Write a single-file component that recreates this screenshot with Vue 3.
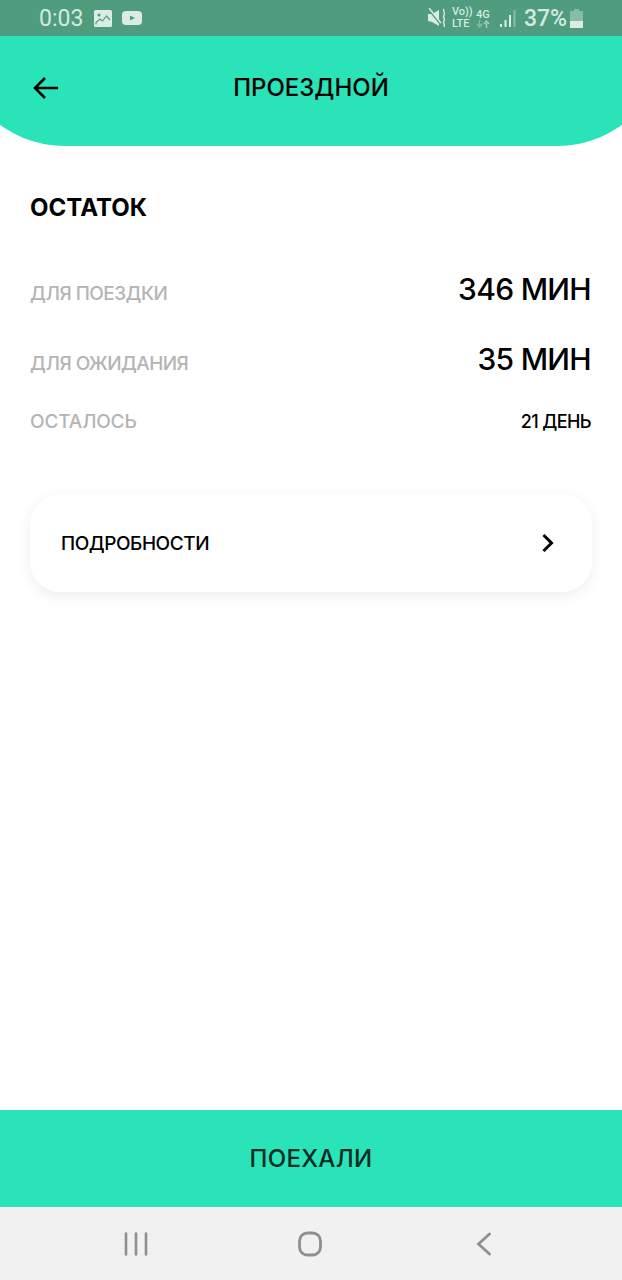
<template>
  <div class="screen">
    <!-- Status bar -->
    <div class="status-bar">
      <div class="status-left">
        <span class="clock">0:03</span>
        <svg class="icon-picture" width="18" height="17" viewBox="0 0 18 17">
          <rect x="0" y="0" width="18" height="17" rx="1.5" fill="#dcebe4" />
          <circle cx="5" cy="5" r="1.6" fill="#4f9c7f" />
          <path d="M2 14.5V12.5l4-3.5 2.5 2 4-5 3.5 4" fill="none" stroke="#4f9c7f" stroke-width="1.2" />
        </svg>
        <svg class="icon-video" width="20" height="14" viewBox="0 0 20 14">
          <rect x="0" y="0" width="20" height="14" rx="4" fill="#dcebe4" />
          <path d="M8 4.5l5 2.5-5 2.5z" fill="#4f9c7f" />
        </svg>
      </div>
      <div class="status-right">
        <svg class="icon-mute" width="19" height="20" viewBox="0 0 19 20">
          <path d="M0 6h4l7-4v16L4 14l-4-1z" fill="#dcebe4" />
          <path d="M1 2l12 15" stroke="#4f9c7f" stroke-width="1.6" />
          <path d="M1 0l12 15" stroke="#dcebe4" stroke-width="1.4" />
          <path d="M16 1c-2 2 2 3 0 6s2 3 0 6 2 3 0 6" fill="none" stroke="#dcebe4" stroke-width="1.4" />
        </svg>
        <div class="net-label">
          <span>Vo))</span>
          <span>LTE</span>
        </div>
        <div class="net-type">
          <span>4G</span>
          <svg width="14" height="8" viewBox="0 0 14 8">
            <path d="M3.5 0v5M1 4l2.5 3L6 4" fill="none" stroke="#86bda6" stroke-width="1.4" />
            <path d="M10.5 8V3M8 4l2.5-3L13 4" fill="none" stroke="#a7d0bf" stroke-width="1.4" />
          </svg>
        </div>
        <svg class="icon-signal" width="16" height="17" viewBox="0 0 16 17">
          <rect x="0" y="14" width="2" height="3" fill="#dcebe4" />
          <rect x="4.5" y="10" width="2" height="7" fill="#dcebe4" />
          <rect x="9" y="5" width="2" height="12" fill="#dcebe4" />
          <rect x="13.5" y="0" width="2" height="17" fill="#86bda6" />
        </svg>
        <span class="battery-text">37%</span>
        <svg class="icon-battery" width="13" height="19" viewBox="0 0 13 19">
          <path d="M4 0h5v2h4v17H0V2h4z" fill="#86bda6" />
          <rect x="0" y="12" width="13" height="7" fill="#dcebe4" />
        </svg>
      </div>
    </div>

    <!-- Header -->
    <header class="header">
      <svg class="back" width="28" height="26" viewBox="0 0 28 26">
        <path d="M26 13H3M13 3L3 13l10 10" fill="none" stroke="#000" stroke-width="2.6" />
      </svg>
      <h1 class="title">ПРОЕЗДНОЙ</h1>
    </header>

    <!-- Content -->
    <main class="content">
      <h2 class="section-title">ОСТАТОК</h2>

      <div class="row row-first">
        <span class="row-label">ДЛЯ ПОЕЗДКИ</span>
        <span class="row-value">346 МИН</span>
      </div>
      <div class="row row-second">
        <span class="row-label">ДЛЯ ОЖИДАНИЯ</span>
        <span class="row-value">35 МИН</span>
      </div>
      <div class="row row-third">
        <span class="row-label">ОСТАЛОСЬ</span>
        <span class="row-value-small">21 ДЕНЬ</span>
      </div>

      <div class="details">
        <span class="details-text">ПОДРОБНОСТИ</span>
        <svg width="14" height="20" viewBox="0 0 14 20">
          <path d="M2.5 2l8 8-8 8" fill="none" stroke="#000" stroke-width="3" />
        </svg>
      </div>
    </main>

    <!-- Action -->
    <button class="go">ПОЕХАЛИ</button>

    <!-- Navigation bar -->
    <nav class="nav-bar">
      <svg width="24" height="24" viewBox="0 0 24 24">
        <path d="M2 1.5v21M12 1.5v21M22 1.5v21" fill="none" stroke="#8f8f8f" stroke-width="2.6" stroke-linecap="round" />
      </svg>
      <svg class="nav-home" width="26" height="26" viewBox="0 0 26 26">
        <rect x="2.5" y="2" width="21" height="22" rx="8" fill="none" stroke="#8f8f8f" stroke-width="2.8" />
      </svg>
      <svg class="nav-back" width="16" height="24" viewBox="0 0 16 24">
        <path d="M13.5 2L2.5 12l11 10" fill="none" stroke="#8f8f8f" stroke-width="2.8" stroke-linecap="round" />
      </svg>
    </nav>
  </div>
</template>

<script setup>
</script>

<style>
html,
body {
  margin: 0;
  background: #fff;
}
</style>

<style scoped>
.screen {
  width: 622px;
  height: 1280px;
  display: flex;
  flex-direction: column;
  overflow: hidden;
  font-family: Inter, 'Noto Sans', sans-serif;
  color: #000;
  background: #fff;
}

.status-bar {
  height: 36px;
  flex: none;
  background: #4f9c7f;
  display: flex;
  justify-content: space-between;
  align-items: center;
  padding: 0 39px;
  box-sizing: border-box;
  color: #d5eadf;
  font-family: Roboto, sans-serif;
}

.status-left,
.status-right {
  display: flex;
  align-items: center;
}

.clock {
  font-size: 23px;
  width: 55px;
}

.icon-video {
  margin-left: 10px;
}

.net-label {
  display: flex;
  flex-direction: column;
  font-size: 11px;
  line-height: 12px;
  margin-left: 5px;
  width: 18px;
  font-weight: 500;
}

.net-type {
  display: flex;
  flex-direction: column;
  align-items: center;
  font-size: 11px;
  line-height: 11px;
  margin-left: 6px;
  font-weight: 500;
}

.icon-signal {
  margin-left: 10px;
}

.battery-text {
  font-size: 23px;
  margin-left: 8px;
  font-weight: 500;
}

.icon-battery {
  margin-left: 3px;
}

/* curve starts off-screen, so it meets the edge at a slope */
.header {
  height: 110px;
  flex: none;
  display: flex;
  align-items: center;
  justify-content: center;
  position: relative;
  overflow: hidden;
  padding-bottom: 6px;
  box-sizing: border-box;
}

.header::before {
  content: '';
  position: absolute;
  top: 0;
  bottom: 0;
  left: -45px;
  right: -45px;
  background: #2ae3b9;
  border-radius: 0 0 115px 115px;
}

.back {
  position: absolute;
  left: 32px;
  top: 39px;
}

.title {
  position: relative;
  margin: 0;
  font-size: 24px;
  font-weight: 500;
  line-height: 30px;
}

.content {
  flex: 1;
  padding: 47px 30px 0;
}

.section-title {
  margin: 0;
  font-size: 24px;
  font-weight: 700;
  line-height: 30px;
}

.row {
  display: flex;
  justify-content: space-between;
  align-items: baseline;
}

.row-first {
  margin-top: 46px;
}

.row-second {
  margin-top: 30px;
}

.row-third {
  margin-top: 31px;
}

.row-label {
  font-size: 19px;
  color: #b4b4b4;
  font-weight: 500;
  letter-spacing: -0.55px;
}

.row-third .row-label {
  letter-spacing: -0.15px;
}

.row-value {
  font-size: 30px;
  font-weight: 500;
  line-height: 40px;
  letter-spacing: -0.7px;
  margin-right: 1px;
}

.row-value-small {
  font-size: 18px;
  font-weight: 500;
  line-height: 24px;
  letter-spacing: -0.6px;
  margin-right: 1px;
}

.details {
  margin-top: 60px;
  height: 98px;
  border-radius: 30px;
  background: #fff;
  box-shadow: 0 4px 14px rgba(0, 0, 0, 0.07);
  display: flex;
  align-items: center;
  justify-content: space-between;
  padding: 0 37px 0 31px;
}

.details-text {
  font-size: 19px;
  font-weight: 500;
  letter-spacing: -0.45px;
}

.go {
  height: 97px;
  flex: none;
  border: none;
  background: #2ae3b9;
  font-family: inherit;
  font-size: 24px;
  font-weight: 500;
  letter-spacing: 0.3px;
  color: #0a2a22;
}

.nav-bar {
  height: 73px;
  flex: none;
  background: #f1f1f1;
  display: flex;
  align-items: center;
  padding: 0 0 0 124px;
}

.nav-home {
  margin-left: 149px;
}

.nav-back {
  margin-left: 153px;
}
</style>
